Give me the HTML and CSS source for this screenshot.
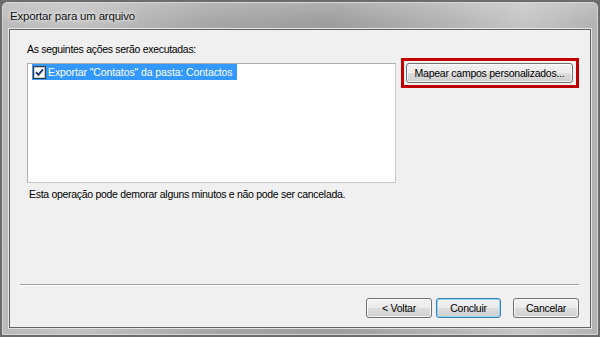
FILE: index.html
```html
<!DOCTYPE html>
<html lang="pt">
<head>
<meta charset="utf-8">
<title>Exportar para um arquivo</title>
<link rel="stylesheet" href="styles.css">
</head>
<body>
<div class="window">
  <div class="titlebar"><span class="title">Exportar para um arquivo</span></div>
  <div class="client">
    <div class="label">As seguintes ações serão executadas:</div>
    <div class="row">
      <div class="listbox">
        <div class="item">
          <svg class="check" width="13" height="13" viewBox="0 0 13 13">
            <rect x="0.5" y="0.5" width="12" height="12" fill="#f4f4f4" stroke="#3a3a3a"/>
            <rect x="1.5" y="1.5" width="10" height="10" fill="#ffffff" stroke="#c8cdd6"/>
            <path d="M3 6.2 L5.4 8.8 L10 3.4" fill="none" stroke="#21306b" stroke-width="1.8"/>
          </svg>
          <span class="itemtext">Exportar "Contatos" da pasta: Contactos</span>
        </div>
      </div>
      <div class="highlight">
        <button class="btn map">Mapear campos personalizados...</button>
      </div>
    </div>
    <div class="note">Esta operação pode demorar alguns minutos e não pode ser cancelada.</div>
    <div class="footer">
      <div class="separator"></div>
      <div class="buttons">
        <button class="btn back">&lt; Voltar</button>
        <button class="btn finish default">Concluir</button>
        <button class="btn cancel">Cancelar</button>
      </div>
    </div>
  </div>
</div>
</body>
</html>
```

FILE: styles.css
```css
html, body {
  margin: 0;
  padding: 0;
}
body {
  width: 600px;
  height: 337px;
  background: #6c6c6c;
  font-family: "Liberation Sans", Arial, sans-serif;
  font-size: 10.5px;
  letter-spacing: -0.3px;
  color: #000;
  overflow: hidden;
}
.window {
  box-sizing: border-box;
  margin: 2px 2px 0 2px;
  height: 333px;
  border: 1px solid #d6d6d6;
  border-radius: 5px 5px 0 0;
  background:
    linear-gradient(180deg, rgba(255,255,255,0.18) 0, rgba(255,255,255,0) 20px),
    linear-gradient(90deg, #b9b9b9 0%, #c2c2c2 12%, #a6a6a6 35%, #9d9d9d 55%, #b4b4b4 75%, #c6c6c6 88%, #b2b2b2 100%);
  display: flex;
  flex-direction: column;
}
.titlebar {
  height: 26px;
  display: flex;
  align-items: center;
  padding-left: 7px;
}
.title {
  font-size: 11.5px;
  letter-spacing: -0.2px;
  color: #111;
  text-shadow: 0 0 6px rgba(255,255,255,0.9), 0 0 3px rgba(255,255,255,0.8);
}
.client {
  flex: 1;
  margin: 0 6px 6px 6px;
  border: 1px solid #626262;
  box-shadow: 0 0 0 1px #e4e4e4;
  background: #f0f0f0;
  display: flex;
  flex-direction: column;
  padding: 12px 11px 9px 17px;
}
.label {
  height: 14px;
  line-height: 14px;
}
.row {
  display: flex;
  align-items: flex-start;
  margin-top: 7px;
}
.listbox {
  box-sizing: border-box;
  width: 369px;
  height: 120px;
  background: #fff;
  border: 1px solid #abadb3;
  border-right-color: #c3c8cf;
  border-bottom-color: #c3c8cf;
  padding: 0 0 0 4px;
}
.item {
  display: inline-flex;
  align-items: center;
  height: 16px;
  background: #3399ff;
  padding: 0 4px 0 1px;
}
.check {
  display: block;
  margin-right: 2px;
}
.itemtext {
  color: #fff;
  line-height: 16px;
  letter-spacing: -0.1px;
}
.highlight {
  margin-left: 5px;
  margin-top: -5px;
  border: 3px solid #c00000;
  padding: 2px 3px 2px 2px;
}
.btn {
  box-sizing: border-box;
  height: 20px;
  font-family: "Liberation Sans", Arial, sans-serif;
  font-size: 10.5px;
  letter-spacing: -0.25px;
  white-space: nowrap;
  color: #000;
  border: 1px solid #707070;
  border-radius: 3px;
  background: linear-gradient(180deg, #f2f2f2 0%, #ebebeb 48%, #dddddd 52%, #cfcfcf 100%);
  box-shadow: inset 0 0 0 1px rgba(255,255,255,0.75);
  padding: 0;
  display: block;
}
.map {
  width: 167px;
}
.note {
  margin-top: 4px;
  padding-left: 2px;
  height: 14px;
  line-height: 14px;
}
.footer {
  margin-top: auto;
  margin-left: -7px;
}
.separator {
  border-top: 1px solid #a0a0a0;
  border-bottom: 1px solid #ffffff;
}
.buttons {
  display: flex;
  justify-content: flex-end;
  margin-top: 12px;
}
.back {
  width: 66px;
  margin-right: 4px;
}
.finish {
  width: 65px;
  margin-right: 12px;
}
.cancel {
  width: 66px;
}
.default {
  border-color: #3c7fb1;
  box-shadow: inset 0 0 0 1px #8fd3f5;
}
```
